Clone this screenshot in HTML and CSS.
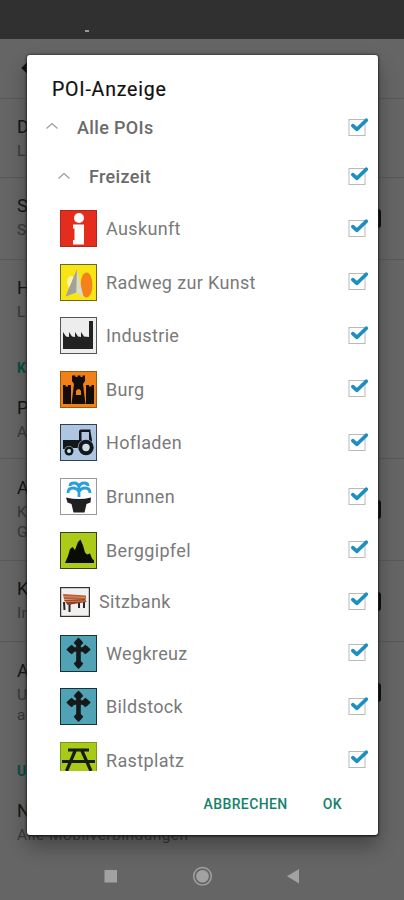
FILE: index.html
```
<!DOCTYPE html>
<html lang="de">
<head>
<meta charset="utf-8">
<title>POI-Anzeige</title>
<link rel="stylesheet" href="styles.css">
</head>
<body>
<svg class="defs" width="0" height="0">
  <symbol id="check" viewBox="0 0 22 22"><rect x="1" y="3.5" width="16" height="16" fill="#fff" stroke="#b9b9b9"/><path d="M4.800 9.600 9 13.300 18.300 4.200" fill="none" stroke="#1c8fc0" stroke-width="3.700" stroke-linecap="round" stroke-linejoin="round"/></symbol>
  <symbol id="up" viewBox="0 0 14 8"><path d="M1.5 6.5 7 1.5 12.5 6.5" fill="none" stroke="#999" stroke-width="1.1"/></symbol>
  <symbol id="cross" viewBox="0 0 37 37"><rect x=".5" y=".5" width="36" height="36" fill="#4fa3b4" stroke="#173238"/><path d="M18.5 5v26M9 14.500h19" stroke="#15191b" stroke-width="4.600"/><path d="m18.5 2.5 3 3 1.800 2.500-2.500 2.500h-4.600l-2.500-2.500 1.800-2.500zM18.500 34l3-3 1.800-2.500-2.500-2.500h-4.600l-2.500 2.500 1.800 2.500zM6.300 14.500l3-3 2.500-1.800 2.500 2.500v4.600l-2.500 2.500-2.500-1.800zM30.700 14.500l-3-3-2.500-1.800-2.500 2.500v4.600l2.500 2.500 2.500-1.800z" fill="#15191b"/></symbol>
</svg>
<div class="screen">
  <div class="status"><i></i></div>
  <div class="settings">
    <div class="head"><svg width="16" height="16" viewBox="0 0 16 16"><path d="M8 2 2 8l6 6M2 8h13" fill="none" stroke="#111" stroke-width="2.4"/></svg></div>
    <div class="pref h79"><b>D</b><span>L</span></div>
    <div class="pref h82"><b>S</b><span>S</span><i class="switch"></i></div>
    <div class="pref last h81"><b>H</b><span>L</span></div>
    <div class="cat">K</div>
    <div class="pref h80"><b>P</b><span>A</span></div>
    <div class="pref h102"><b>A</b><span>K</span><span>G</span><i class="switch"></i></div>
    <div class="pref h81"><b>K</b><span>In</span><i class="switch"></i></div>
    <div class="pref last h102"><b>A</b><span>U</span><span>a</span><i class="switch"></i></div>
    <div class="cat">U</div>
    <div class="pref last h80"><b>N</b><span class="mobile">Alle Mobilverbindungen</span></div>
  </div>
  <div class="nav">
    <svg width="404" height="48" viewBox="0 0 404 48"><g fill="#a2a2a2"><path d="M104.500 18h12.500v12.500h-12.500zM299 17v14.500L287 24.200z"/><circle cx="202.500" cy="24.300" r="6.300"/><circle cx="202.500" cy="24.300" r="8.800" fill="none" stroke="#a2a2a2" stroke-width="1.400"/></g></svg>
  </div>
  <div class="dialog">
    <h1>POI-Anzeige</h1>
    <div class="list">
      <div class="row group all"><svg class="chev"><use href="#up"/></svg><span>Alle POIs</span><svg class="check"><use href="#check"/></svg></div>
      <div class="row group sub"><svg class="chev"><use href="#up"/></svg><span>Freizeit</span><svg class="check"><use href="#check"/></svg></div>
      <div class="row"><svg class="icon" viewBox="0 0 37 37"><rect x=".5" y=".5" width="36" height="36" fill="#e52d1d" stroke="#a82b20"/><circle cx="19" cy="8" r="5" fill="#fff"/><path d="M13 14.500h11V34.500H13V30h1.500V18.500H13z" fill="#fff"/></svg><span>Auskunft</span><svg class="check"><use href="#check"/></svg></div>
      <div class="row"><svg class="icon" viewBox="0 0 37 37"><rect x=".5" y=".5" width="36" height="36" fill="#f8e516" stroke="#6c681e"/><ellipse cx="11" cy="18" rx="4" ry="6" fill="#fff3ae"/><ellipse cx="26.500" cy="21" rx="6" ry="12.500" fill="#f58218"/><path d="M17 5 5.500 32.500l11-4z" fill="#a2a29b"/><path d="m17 5-.5 23.500 7 4.500z" fill="#d9d9ce"/></svg><span>Radweg zur Kunst</span><svg class="check"><use href="#check"/></svg></div>
      <div class="row"><svg class="icon" viewBox="0 0 37 37"><rect x=".5" y=".5" width="36" height="36" fill="#ededed" stroke="#555"/><path d="M3 32V15l3 4.500 3 .5V15l3 4.500 3 .5V15l3 4.500 3 .5V15l3 4.500 5 .5V4h4v28z" fill="#222"/></svg><span>Industrie</span><svg class="check"><use href="#check"/></svg></div>
      <div class="row"><svg class="icon" viewBox="0 0 37 37"><rect x=".5" y=".5" width="36" height="36" fill="#ef8116" stroke="#9c5915"/><path d="M3 33V14h2.500v1.500h2.500V14h3v19zM26 33V14h3v1.500h2.500V14h2.500v19z" fill="#120d08"/><path d="M11.500 33 14 13l-2-3V4.500h3.500V6h2V4.500h3V6h2V4.500H25V10l-2 3 2.500 20z" fill="#120d08"/><path d="M16 24v-4q2.500-4 5 0v4z" fill="#ef8116"/></svg><span>Burg</span><svg class="check"><use href="#check"/></svg></div>
      <div class="row"><svg class="icon" viewBox="0 0 37 37"><rect x=".5" y=".5" width="36" height="36" fill="#afc6e2" stroke="#34404f"/><path d="M3 16h16V7.500q0-2 2-2h9.500v2L32 16v8H13l-2 1H3z" fill="#12171a"/><path d="M21.500 8h7.500v8h-7.500z" fill="#afc6e2"/><circle cx="26" cy="23.500" r="8.300" fill="#afc6e2"/><circle cx="26" cy="23.500" r="7.700" fill="#12171a"/><circle cx="26" cy="23.500" r="3.700" fill="#cfdeed"/><circle cx="9" cy="27" r="4.900" fill="#afc6e2"/><circle cx="9" cy="27" r="4.500" fill="#12171a"/><circle cx="9" cy="27" r="2" fill="#cfdeed"/></svg><span>Hofladen</span><svg class="check"><use href="#check"/></svg></div>
      <div class="row"><svg class="icon" viewBox="0 0 37 37"><rect x=".5" y=".5" width="36" height="36" fill="#fff" stroke="#999"/><g fill="none" stroke="#2c9edb" stroke-width="2.800"><path d="M19 19V9q-1-4-5-4-4 0-4 3M19 9q1-4 5-4 4 0 4 3M19 14q-2-4-6-4-5 0-5 5M19 14q2-4 6-4 5 0 5 5"/></g><path d="M6 19.500q13 3 25 0l-.5 5-4 1.500-2 8.500h-11l-2-8.500-4-1.500z" fill="#202020"/></svg><span>Brunnen</span><svg class="check"><use href="#check"/></svg></div>
      <div class="row"><svg class="icon" viewBox="0 0 37 37"><rect x=".5" y=".5" width="36" height="36" fill="#abcb18" stroke="#384216"/><path d="m5 31 3-7 2-7 2.500-2 2.500 3 3-8 2.500-2.500 2.500 6 2 7 2 2 3-1 2 5 2 2v2.500z" fill="#090b04"/></svg><span>Berggipfel</span><svg class="check"><use href="#check"/></svg></div>
      <div class="row bench"><svg class="icon" viewBox="0 0 30 30"><rect x=".6" y=".6" width="28.800" height="28.800" fill="#f1f0ef" stroke="#34302e" stroke-width="1.200"/><path d="m4 15 .5 8M9.500 17v8M24 15v6M19 16v5" fill="none" stroke="#27282a" stroke-width="2"/><path d="m3 7 23 1.500v4L4 12.500z" fill="#b96038"/><path d="m4 13 21-1 1.500 3-19 3z" fill="#924222"/><path d="m3.500 9.500 22 1M5 14.500l20-.5" stroke="#e2a17a" stroke-width=".7"/></svg><span>Sitzbank</span><svg class="check"><use href="#check"/></svg></div>
      <div class="row"><svg class="icon"><use href="#cross"/></svg><span>Wegkreuz</span><svg class="check"><use href="#check"/></svg></div>
      <div class="row"><svg class="icon"><use href="#cross"/></svg><span>Bildstock</span><svg class="check"><use href="#check"/></svg></div>
      <div class="row"><svg class="icon" viewBox="0 0 37 37"><rect x=".5" y=".5" width="36" height="36" fill="#a9cb16" stroke="#7d9620"/><path d="M8 8h21M2 19.500h33M15 9 6.500 29M22 9l9 20" fill="none" stroke="#171b09" stroke-width="3.200"/></svg><span>Rastplatz</span><svg class="check"><use href="#check"/></svg></div>
    </div>
    <div class="actions"><button>ABBRECHEN</button><button>OK</button></div>
  </div>
</div>
</body>
</html>
```
FILE: styles.css
```
* { box-sizing: border-box; }
body { margin: 0; font-family: Roboto, sans-serif; }
.defs { position: absolute; }
.screen { position: relative; width: 404px; height: 900px; overflow: hidden; background: #656565; display: flex; flex-direction: column; }
.status { height: 39px; flex: none; background: #303030; padding: 30px 0 0 85px; }
.status i { display: block; width: 4px; height: 2px; background: #999; }
.settings { flex: 1; overflow: hidden; }
.head { height: 60px; padding: 21px 0 0 21px; border-bottom: 1px solid #595959; }
.head svg { display: block; }
.pref { position: relative; padding: 16px 0 0 17px; border-bottom: 1px solid #595959; color: #393939; }
.pref.last { border-bottom: 0; }
.pref b { display: block; font-size: 18px; line-height: 24px; font-weight: 400; color: #161616; }
.pref span { display: block; font-size: 15.5px; line-height: 20px; letter-spacing: .2px; height: 20px; }
.pref b + span { height: 22px; padding-top: 2px; }
.pref .mobile { letter-spacing: .45px; }
.h79 { height: 79px; }
.h80 { height: 79px; }
.h81 { height: 81px; }
.h82 { height: 82px; }
.h102 { height: 102px; padding-top: 17px; }
.switch { position: absolute; left: 345px; top: 31px; width: 36px; height: 19px; border-radius: 3px; background: #111; }
.h102 .switch { top: 41px; }
.cat { height: 39px; padding: 17px 0 0 17px; font-size: 14px; font-weight: 700; line-height: 20px; color: #064f42; }
.nav { height: 48px; flex: none; }
.nav svg { display: block; }
.dialog { position: absolute; left: 27px; top: 55px; width: 351px; height: 780px; background: #fff; border-radius: 3px; box-shadow: 0 0 3px #222, 0 1px 2px #111, 0 11px 20px rgba(0,0,0,.33); display: flex; flex-direction: column; }
h1 { height: 48px; margin: 0; padding: 21px 0 0 25px; flex: none; font-size: 19.5px; line-height: 27px; font-weight: 400; color: #111; letter-spacing: .8px; -webkit-text-stroke: .2px #111; }
.list { height: 667.5px; flex: none; overflow: hidden; }
.row { display: flex; align-items: center; height: 53.6px; padding: 0 8px 0 33px; color: #7a7a7a; font-size: 18px; letter-spacing: .35px; }
.row span { flex: 1; white-space: nowrap; }
.icon { width: 37px; height: 37px; flex: none; margin-right: 9px; }
.check { width: 22px; height: 22px; flex: none; margin-top: -2px; }
.group { height: 49.4px; font-weight: 500; color: #6b6b6b; }
.group span { margin-top: -1px; }
.all { padding-left: 18px; }
.sub { padding-left: 30px; }
.chev { width: 14px; height: 8px; margin: -3px 18px 0 0; }
.bench { height: 49.4px; }
.bench .icon { width: 30px; height: 30px; }
.actions { flex: 1; display: flex; justify-content: flex-end; align-items: flex-start; gap: 35px; padding: 23px 36px 0 0; }
button { border: 0; padding: 0; background: none; font: 500 14px/21px Roboto, sans-serif; color: #168169; letter-spacing: .4px; }
```
